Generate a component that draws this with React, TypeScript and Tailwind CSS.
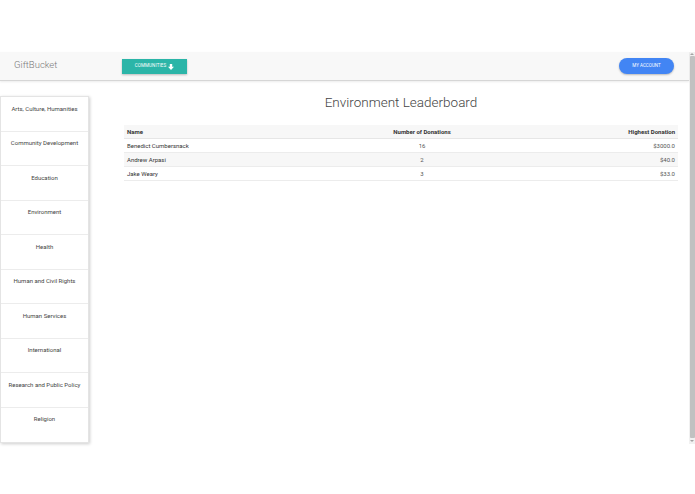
import React from "react";

const categories = [
  "Arts, Culture, Humanities",
  "Community Development",
  "Education",
  "Environment",
  "Health",
  "Human and Civil Rights",
  "Human Services",
  "International",
  "Research and Public Policy",
  "Religion",
];

const rows = [
  { name: "Benedict Cumbersnack", count: "16", top: "$3000.0" },
  { name: "Andrew Arpasi", count: "2", top: "$40.0" },
  { name: "Jake Weary", count: "3", top: "$33.0" },
];

export default function App() {
  return (
    <div
      className="w-[695px] h-[494px] bg-white flex flex-col overflow-hidden"
      style={{ fontFamily: "Roboto, 'Liberation Sans', sans-serif" }}
    >
      <div className="h-[52px] shrink-0" />
      <div className="h-[392px] flex shrink-0">
        <div className="flex-1 flex flex-col min-w-0">
          {/* navbar */}
          <div className="h-[29px] shrink-0 bg-[#f8f8f8] border-b border-[#d6d6d6] shadow-[0_1px_2px_rgba(0,0,0,0.08)] flex items-center relative">
            <div className="ml-[14px] text-[9.5px] font-light text-[#7a7a7a] w-[108px] mt-[-1px]">GiftBucket</div>
            <div className="h-[15px] w-[65px] bg-[#2bb5a8] shadow-[0_1px_2px_rgba(0,0,0,0.25)] flex items-center justify-center gap-[2px] text-white text-[4.5px] leading-none tracking-[0.1px] mt-[1px]">
              <span className="leading-none">COMMUNITIES</span>
              <svg width="6" height="6" viewBox="0 0 10 10">
                <path d="M3 0h4v4.5h3L5 10 0 4.5h3z" fill="white" />
              </svg>
            </div>
            <div className="flex-1" />
            <div className="h-[16px] w-[55px] mr-[15px] rounded-full bg-[#4285f4] shadow-[0_1px_2px_rgba(0,0,0,0.25)] flex items-center justify-center text-white text-[4.5px] leading-none">
              MY ACCOUNT
            </div>
          </div>
          {/* body */}
          <div className="flex flex-1 min-h-0">
            <div className="w-[89px] shrink-0 mt-[15px] h-[347px] bg-white border border-[#e4e4e4] shadow-[1px_1px_3px_rgba(0,0,0,0.2)] flex flex-col">
              {categories.map((c, i) => (
                <div
                  key={c}
                  className={`h-[34.5px] shrink-0 flex justify-center pt-[7.5px] text-[6px] leading-[8px] text-[#444] ${
                    i < categories.length - 1 ? "border-b border-[#ececec]" : ""
                  }`}
                >
                  {c}
                </div>
              ))}
            </div>
            <div className="flex-1 ml-[35px] mr-[11px] flex flex-col">
              <div className="text-center text-[13.5px] font-light text-[#444] mt-[12px] leading-[18px]">
                Environment Leaderboard
              </div>
              <div className="mt-[14px] text-[6px] text-[#333]">
                <div className="grid grid-cols-[196px_198px_1fr] h-[14px] items-center bg-[#f7f7f7] border-b border-[#e6e6e6] font-bold px-[3px]">
                  <div>Name</div>
                  <div className="text-center">Number of Donations</div>
                  <div className="text-right">Highest Donation</div>
                </div>
                {rows.map((r, i) => (
                  <div
                    key={r.name}
                    className={`grid grid-cols-[196px_198px_1fr] h-[14px] items-center border-b border-[#ececec] px-[3px] ${
                      i === 1 ? "bg-[#f7f7f7]" : "bg-white"
                    }`}
                  >
                    <div>{r.name}</div>
                    <div className="text-center text-[#555]">{r.count}</div>
                    <div className="text-right text-[#555]">{r.top}</div>
                  </div>
                ))}
              </div>
            </div>
          </div>
        </div>
        {/* scrollbar */}
        <div className="w-[6px] shrink-0 bg-[#f1f1f1] flex flex-col items-center">
          <div className="h-[4px] flex items-center justify-center">
            <div className="w-0 h-0 border-l-[2px] border-r-[2px] border-b-[2px] border-l-transparent border-r-transparent border-b-[#a3a3a3]" />
          </div>
          <div className="flex-1 w-[5px] bg-[#c1c1c1] rounded-[1px]" />
          <div className="h-[6px] flex items-center justify-center">
            <div className="w-0 h-0 border-l-[2px] border-r-[2px] border-t-[2px] border-l-transparent border-r-transparent border-t-[#a3a3a3]" />
          </div>
        </div>
      </div>
    </div>
  );
}
